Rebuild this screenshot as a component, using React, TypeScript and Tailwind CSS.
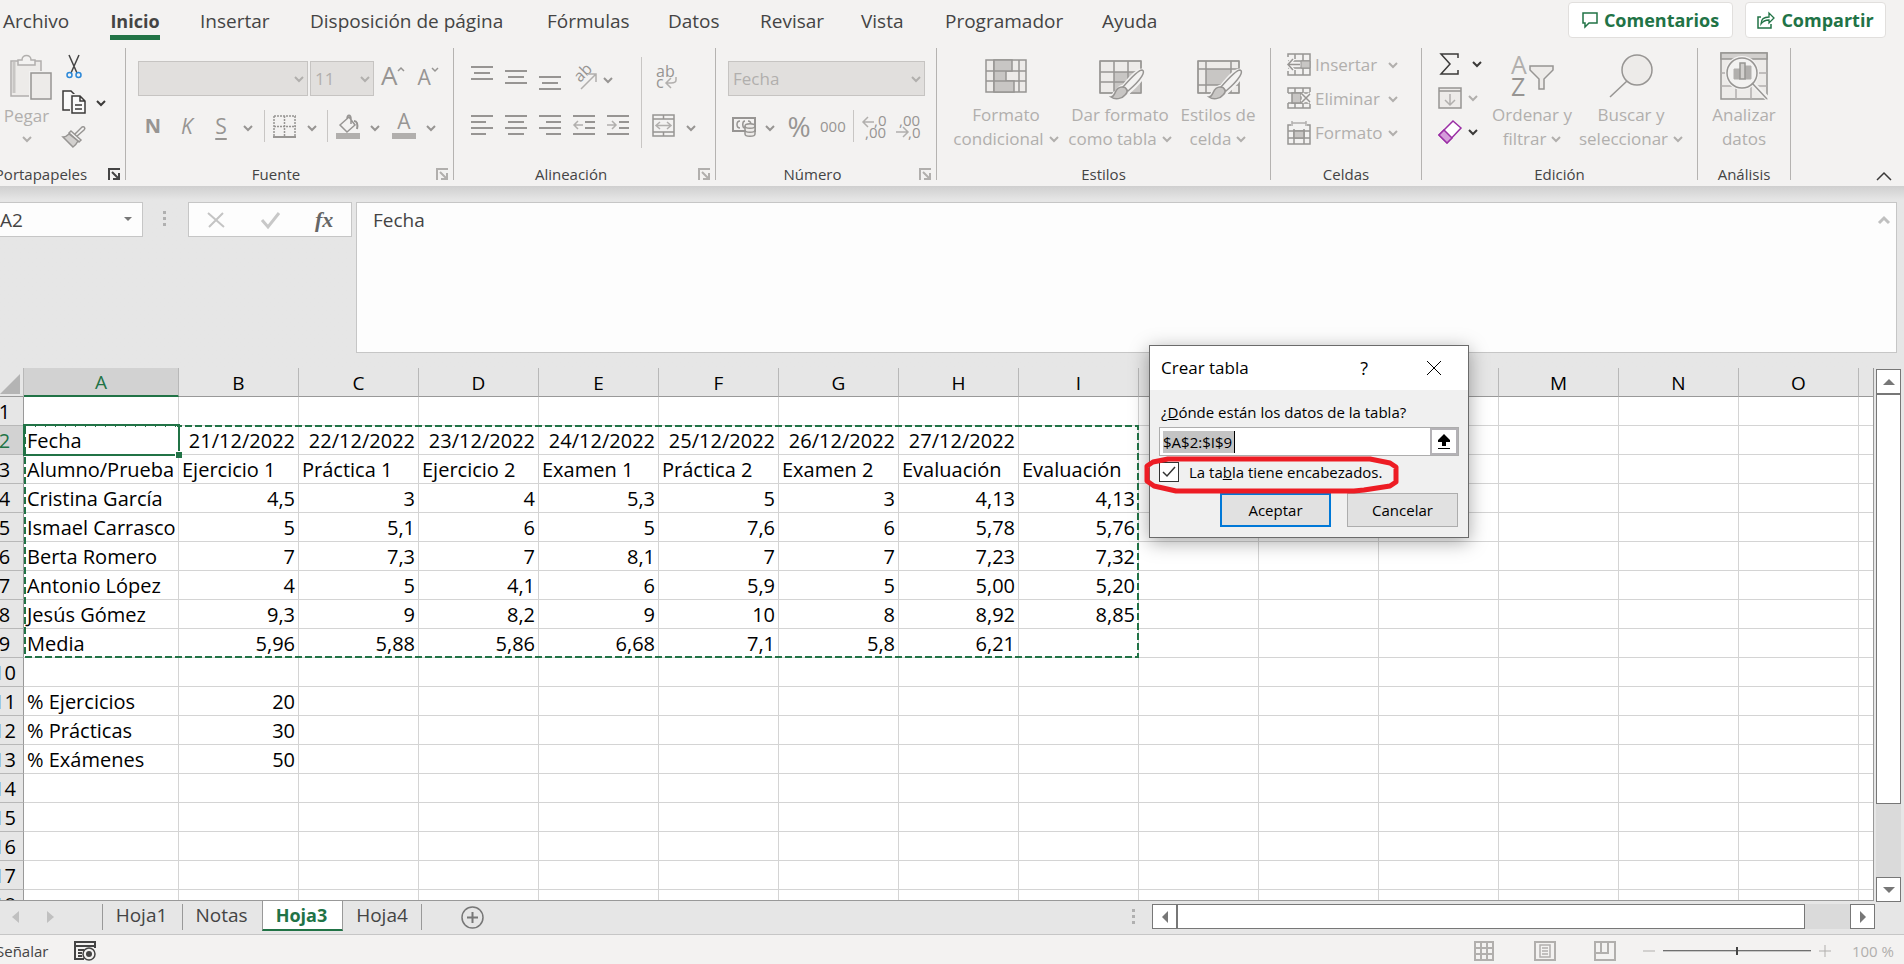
import type { ReactNode } from "react";
import clsx from "clsx";

const COLUMNS = ["A", "B", "C", "D", "E", "F", "G", "H", "I", "J", "K", "L", "M", "N", "O"];

const ROWS: string[][] = [
  [],
  ["Fecha", "21/12/2022", "22/12/2022", "23/12/2022", "24/12/2022", "25/12/2022", "26/12/2022", "27/12/2022"],
  ["Alumno/Prueba", "Ejercicio 1", "Práctica 1", "Ejercicio 2", "Examen 1", "Práctica 2", "Examen 2", "Evaluación", "Evaluación"],
  ["Cristina García", "4,5", "3", "4", "5,3", "5", "3", "4,13", "4,13"],
  ["Ismael Carrasco", "5", "5,1", "6", "5", "7,6", "6", "5,78", "5,76"],
  ["Berta Romero", "7", "7,3", "7", "8,1", "7", "7", "7,23", "7,32"],
  ["Antonio López", "4", "5", "4,1", "6", "5,9", "5", "5,00", "5,20"],
  ["Jesús Gómez", "9,3", "9", "8,2", "9", "10", "8", "8,92", "8,85"],
  ["Media", "5,96", "5,88", "5,86", "6,68", "7,1", "5,8", "6,21"],
  [],
  ["% Ejercicios", "20"],
  ["% Prácticas", "30"],
  ["% Exámenes", "50"],
  [],
  [],
  [],
  [],
  [],
];

const MENU = [
  { name: "Archivo", width: "w-[107px]" },
  { name: "Inicio", width: "w-[90px]" },
  { name: "Insertar", width: "w-[110px]" },
  { name: "Disposición de página", width: "w-[237px]" },
  { name: "Fórmulas", width: "w-[121px]" },
  { name: "Datos", width: "w-[92px]" },
  { name: "Revisar", width: "w-[101px]" },
  { name: "Vista", width: "w-[84px]" },
  { name: "Programador", width: "w-[157px]" },
  { name: "Ayuda", width: "w-[80px]" },
];

const Svg = ({ w, h, children, className }: { w: number; h: number; children: ReactNode; className?: string }) => (
  <svg width={w} height={h} viewBox={`0 0 ${w} ${h}`} fill="none" stroke="currentColor" className={clsx("shrink-0 overflow-visible", className)}>
    {children}
  </svg>
);

const Chevron = ({ className }: { className?: string }) => (
  <Svg w={10} h={6} className={className}>
    <path d="M1 1l4 4 4-4" strokeWidth="2" />
  </Svg>
);

const IconButton = ({ label, className, children }: { label: string; className?: string; children: ReactNode }) => (
  <button type="button" aria-label={label} className={clsx("flex shrink-0 items-center", className)}>
    {children}
  </button>
);

const Launcher = ({ active }: { active?: boolean }) => (
  <IconButton label="Más opciones" className={clsx("mr-[5px] w-[22px] justify-end", active ? "text-[#444]" : "text-[#b1afad]")}>
    <Svg w={12} h={12}>
      <path d="M1 12V1h11" strokeWidth="2" />
      <path d="M4 4l6 6M11 5v6H5" strokeWidth="2" />
    </Svg>
  </IconButton>
);

const Group = ({ title, width, launcher, children }: { title: string; width: string; launcher?: "on" | "off"; children: ReactNode }) => (
  <section className={clsx("flex h-[132px] shrink-0 flex-col border-r border-[#b5b3b1]", width)}>
    <div className="flex-1">{children}</div>
    <div className="flex h-3 items-center">
      <h2 className="flex-1 text-center text-[15px] leading-5 text-[#444]">{title}</h2>
      {launcher && <Launcher active={launcher === "on"} />}
    </div>
  </section>
);

const LargeButton = ({ icon, top, bottom, menu, className }: { icon: ReactNode; top: string; bottom: string; menu?: boolean; className?: string }) => (
  <button type="button" className={clsx("flex shrink-0 flex-col items-center text-[17px] leading-6 whitespace-nowrap text-[#b1afad]", className)}>
    <span className="flex h-[55px] items-center text-[#979593]">{icon}</span>
    <span>{top}</span>
    <span className="flex items-center gap-[5px]">
      {bottom}
      {menu && <Chevron />}
    </span>
  </button>
);

const DropDown = ({ label, value, className }: { label: string; value: string; className: string }) => (
  <div className={clsx("relative shrink-0", className)}>
    <select aria-label={label} className="h-[35px] w-full appearance-none border border-[#c6c4c2] bg-[#e1dfdd] px-1 text-[17px] leading-6 text-[#b1afad]">
      <option>{value}</option>
    </select>
    <Chevron className="pointer-events-none absolute top-[15px] right-1 text-[#b1afad]" />
  </div>
);

const Lines = ({ rows }: { rows: [number, number, number][] }) => (
  <>
    {rows.map(([x1, x2, y]) => (
      <path key={y} d={`M${x1} ${y}H${x2}`} strokeWidth="2" />
    ))}
  </>
);

const Brush = () => (
  <>
    <path d="M16 35c4-1 3-7 9-7 4 0 5 5 2 8-3 4-10 5-15 2 2 0 3-1 4-3z" fill="#f3f2f1" stroke="#f3f2f1" strokeWidth="5" />
    <path d="M25 28C31 20 38 12 43 12c4 0 1 7-13 20z" fill="#f3f2f1" stroke="#f3f2f1" strokeWidth="5" />
    <path d="M24 28C31 20 39 11 43 11c4 1 0 9-14 21z" fill="#f3f2f1" strokeWidth="1.5" />
    <path d="M12 38c5 0 3-10 11-10 5 0 7 5 3 8-3 4-10 5-14 2z" fill="#c8c6c4" strokeWidth="1.5" />
  </>
);

function MenuBar() {
  return (
    <header className="flex h-11 items-start">
      <nav className="flex pl-[19px]">
        {MENU.map(({ name, width }) => (
          <div key={name} className={clsx("shrink-0 leading-6 text-[#444]", width)}>
            <button
              type="button"
              className={clsx(
                "block h-10 border-b-[5px] pt-[6px] whitespace-nowrap",
                name === "Inicio" ? "w-[50px] border-[#217346] text-lg leading-6 font-bold" : "border-transparent text-[19px] leading-6"
              )}
            >
              {name}
            </button>
          </div>
        ))}
      </nav>
      <div className="mt-[2px] mr-[18px] ml-auto flex gap-3 text-lg font-bold text-[#217346]">
        <button type="button" className="flex h-9 w-[165px] items-center justify-center gap-[6px] rounded-sm border border-[#e1dfdd] bg-white">
          <Svg w={16} h={17}>
            <path d="M1 1h14v10H7l-4 4v-4H1z" strokeWidth="1.5" />
          </Svg>
          Comentarios
        </button>
        <button type="button" className="flex h-9 w-[141px] items-center justify-center gap-[6px] rounded-sm border border-[#e1dfdd] bg-white">
          <Svg w={18} h={18}>
            <path d="M4 6H1v11h13v-4" strokeWidth="1.5" />
            <path d="M4 13c0-5 3-7 8-7V2l5 5-5 5V9c-4 0-6 1-8 4z" strokeWidth="1.3" />
          </Svg>
          Compartir
        </button>
      </div>
    </header>
  );
}

function Clipboard() {
  return (
    <Group title="Portapapeles" width="w-[142px]" launcher="on">
      <div className="flex">
        <button type="button" className="ml-[14px] flex w-[57px] flex-col items-center pt-[6px] text-[17px] leading-6 text-[#b1afad]">
          <Svg w={42} h={46} className="ml-2 text-[#979593]">
            <path d="M10 7H1v35h30V7h-9" fill="#edebe9" stroke="#b1afad" strokeWidth="1.5" />
            <path d="M4 8v31" stroke="#c8c6c4" strokeWidth="3" />
            <path d="M8 11V6h4c0-6 9-6 9 0h4v5z" fill="#f3f2f1" stroke="#b1afad" strokeWidth="1.5" />
            <rect x="19" y="17" width="24" height="30" fill="#f3f2f1" stroke="none" />
            <rect x="21" y="19" width="20" height="26" fill="#edebe9" strokeWidth="1.5" />
          </Svg>
          <span className="mt-1">Pegar</span>
          <Chevron className="mt-2" />
        </button>
        <div className="ml-[7px] flex flex-col pt-[6px]">
          <IconButton label="Cortar" className="h-6 w-6 justify-center">
            <Svg w={16} h={25}>
              <path d="M3 1l8 18M13 1L5 19" stroke="#444" strokeWidth="1.5" />
              <circle cx="3.500" cy="21" r="2.500" stroke="#2b88d8" strokeWidth="1.5" />
              <circle cx="12.500" cy="21" r="2.500" stroke="#2b88d8" strokeWidth="1.5" />
            </Svg>
          </IconButton>
          <IconButton label="Copiar" className="mt-3 gap-[10px] text-[#3b3a39]">
            <Svg w={24} h={25}>
              <path d="M1 1h8l4 4v15H1z" fill="#fafafa" strokeWidth="1.5" />
              <path d="M10 6h8l5 5v12H10z" fill="#fafafa" stroke="#f3f2f1" strokeWidth="4" />
              <path d="M10 6h8l5 5v12H10zM18 6v5h5M13 15h7M13 19h7" fill="#fafafa" strokeWidth="1.5" />
            </Svg>
            <Chevron />
          </IconButton>
          <IconButton label="Copiar formato" className="mt-[10px] text-[#979593]">
            <Svg w={24} h={24}>
              <path d="M12 10l8-8c2-1 4 1 2 3l-8 7" strokeWidth="1.5" />
              <path d="M9 6l10 9-2 2L7 8z" fill="#f3f2f1" strokeWidth="1.5" />
              <path d="M7 9c-2 2-4 3-6 3l10 10c3-2 4-4 5-6z" fill="#d2d0ce" strokeWidth="1.5" />
            </Svg>
          </IconButton>
        </div>
      </div>
    </Group>
  );
}

function FontGroup() {
  return (
    <Group title="Fuente" width="w-[328px]" launcher="off">
      <div className="flex pt-[13px] pl-3 text-[#979593]">
        <DropDown label="Fuente" value="" className="w-[170px]" />
        <DropDown label="Tamaño de fuente" value="11" className="ml-[2px] w-16" />
        <IconButton label="Aumentar tamaño" className="ml-[7px] h-7">
          <span className="text-[26px] leading-7">A</span>
          <Svg w={8} h={5} className="mb-3">
            <path d="M1 4l3-3 3 3" strokeWidth="1.5" />
          </Svg>
        </IconButton>
        <IconButton label="Disminuir tamaño" className="ml-3 h-8">
          <span className="text-[21px] leading-7">A</span>
          <Svg w={8} h={5} className="mb-4">
            <path d="M1 1l3 3 3-3" strokeWidth="1.5" />
          </Svg>
        </IconButton>
      </div>
      <div className="mt-[14px] flex h-8 items-center pl-[10px] text-[21px] leading-6 text-[#979593]">
        <button type="button" className="w-[34px] text-xl font-bold">N</button>
        <button type="button" className="w-[34px] italic">K</button>
        <button type="button" className="w-[34px] underline underline-offset-4">S</button>
        <Chevron className="mt-1 ml-[5px]" />
        <span className="ml-[11px] h-8 w-px bg-[#c8c6c4]" />
        <IconButton label="Bordes" className="ml-2">
          <Svg w={23} h={23}>
            <path d="M1 1h22M1 1v20M22 1v20M11.500 1v20M1 11.500h22" strokeWidth="1.5" strokeDasharray="2 1" />
            <path d="M0 22h23" strokeWidth="2" />
          </Svg>
        </IconButton>
        <Chevron className="mt-1 ml-[11px]" />
        <span className="ml-[10px] h-8 w-px bg-[#c8c6c4]" />
        <IconButton label="Color de relleno" className="ml-2">
          <Svg w={24} h={25}>
            <path d="M4 11l9-8 6 8-8 7zM11 5c0-5 4-5 4 0v5" strokeWidth="1.5" />
            <path d="M18 7c3 0 4 3 3 8" strokeWidth="2" />
            <rect y="19" width="24" height="6" fill="#b1afad" stroke="none" />
          </Svg>
        </IconButton>
        <Chevron className="mt-1 ml-[10px]" />
        <button type="button" className="ml-3 flex h-[25px] w-6 items-center justify-center border-b-[6px] border-[#b1afad] pb-1">A</button>
        <Chevron className="mt-1 ml-[10px]" />
      </div>
    </Group>
  );
}

function Alignment() {
  return (
    <Group title="Alineación" width="w-[262px]" launcher="off">
      <div className="flex text-[#979593]">
        <div className="w-[187px] pl-[17px]">
          <div className="mt-[17px] flex h-[26px] gap-3">
            <Svg w={22} h={26}>
              <Lines rows={[[0, 22, 2], [3, 19, 8], [0, 22, 14]]} />
            </Svg>
            <Svg w={22} h={26}>
              <Lines rows={[[0, 22, 6], [3, 19, 12], [0, 22, 18]]} />
            </Svg>
            <Svg w={22} h={26}>
              <Lines rows={[[0, 22, 12], [3, 19, 18], [0, 22, 24]]} />
            </Svg>
            <IconButton label="Orientación" className="gap-[6px]">
              <Svg w={24} h={26}>
                <text transform="translate(7 18) rotate(-45)" fontSize="16" fill="currentColor" stroke="none">ab</text>
                <path d="M8 24L23 9M15 9h8v8" strokeWidth="1.500" stroke="#b1afad" />
              </Svg>
              <Chevron className="mt-1" />
            </IconButton>
          </div>
          <div className="mt-[22px] flex gap-3">
            <Svg w={22} h={22}>
              <Lines rows={[[0, 22, 3], [0, 15, 9], [0, 22, 15], [0, 15, 21]]} />
            </Svg>
            <Svg w={22} h={22}>
              <Lines rows={[[0, 22, 3], [3, 19, 9], [0, 22, 15], [3, 19, 21]]} />
            </Svg>
            <Svg w={22} h={22}>
              <Lines rows={[[0, 22, 3], [7, 22, 9], [0, 22, 15], [7, 22, 21]]} />
            </Svg>
            <Svg w={22} h={22}>
              <Lines rows={[[0, 22, 3], [12, 22, 9], [12, 22, 15], [0, 22, 21]]} />
              <path d="M10 12H1M5 8l-4 4 4 4" strokeWidth="1.500" stroke="#b1afad" />
            </Svg>
            <Svg w={22} h={22}>
              <Lines rows={[[0, 22, 3], [12, 22, 9], [12, 22, 15], [0, 22, 21]]} />
              <path d="M0 12h9M5 8l4 4-4 4" strokeWidth="1.500" stroke="#b1afad" />
            </Svg>
          </div>
        </div>
        <span className="mt-[9px] h-[91px] w-px bg-[#c8c6c4]" />
        <div className="pt-[17px] pl-[10px]">
          <IconButton label="Ajustar texto" className="ml-1">
            <Svg w={22} h={26}>
              <text x="0" y="12" fontSize="16" fill="currentColor" stroke="none">ab</text>
              <text x="0" y="23" fontSize="16" fill="currentColor" stroke="none">c</text>
              <path d="M20 12v3c0 3-3 3-5 3h-5M15 13l-5 5 5 5" stroke="#b1afad" strokeWidth="1.500" />
            </Svg>
          </IconButton>
          <IconButton label="Combinar y centrar" className="mt-[23px] gap-[11px]">
            <Svg w={23} h={23}>
              <path d="M1 1h21v21H1zM1 5h21M1 18h21M11.500 1v4M11.500 18v4" strokeWidth="1.500" />
              <path d="M4 11.500h15M8 8l-4 3.500L8 15M15 8l4 3.500-4 3.500" strokeWidth="1.500" stroke="#b1afad" />
            </Svg>
            <Chevron className="mt-1" />
          </IconButton>
        </div>
      </div>
    </Group>
  );
}

function NumberGroup() {
  return (
    <Group title="Número" width="w-[221px]" launcher="off">
      <div className="pt-[13px] pl-3">
        <DropDown label="Formato de número" value="Fecha" className="w-[197px]" />
      </div>
      <div className="mt-[14px] flex h-8 items-center pl-4 text-[#979593]">
        <IconButton label="Formato de contabilidad" className="gap-[9px]">
          <Svg w={24} h={21}>
            <path d="M1 2h22v13H1z" strokeWidth="2" />
            <path d="M8 5c-4 0-4 7 0 7M13 5c-3 0-3 7 0 7M16 5c3 0 3 3 3 4" strokeWidth="1.500" />
            <path d="M13 10c0-3 10-3 10 0v8c0 3-10 3-10 0z" fill="#edebe9" strokeWidth="1.500" />
            <path d="M13 10c0 3 10 3 10 0M13 14c0 3 10 3 10 0" strokeWidth="1.500" />
          </Svg>
          <Chevron className="mt-1" />
        </IconButton>
        <button type="button" className="ml-3 w-6 text-[28px] leading-8">%</button>
        <button type="button" className="ml-[9px] w-6 text-[15px] leading-6">000</button>
        <span className="ml-[9px] h-8 w-px bg-[#c8c6c4]" />
        <IconButton label="Aumentar decimales" className="ml-2">
          <Svg w={24} h={25}>
            <path d="M12 8H1M6 3L1 8l5 5" strokeWidth="1.500" stroke="#b1afad" />
            <text x="12" y="12" fontSize="15" fill="currentColor" stroke="none">,0</text>
            <text x="3" y="24" fontSize="15" fill="currentColor" stroke="none">,00</text>
          </Svg>
        </IconButton>
        <IconButton label="Disminuir decimales" className="ml-[10px]">
          <Svg w={24} h={25}>
            <path d="M0 18h12M7 13l5 5-5 5" strokeWidth="1.500" stroke="#b1afad" />
            <text x="3" y="12" fontSize="15" fill="currentColor" stroke="none">,00</text>
            <text x="12" y="24" fontSize="15" fill="currentColor" stroke="none">,0</text>
          </Svg>
        </IconButton>
      </div>
    </Group>
  );
}

function Styles() {
  return (
    <Group title="Estilos" width="w-[334px]">
      <div className="flex pl-[14px]">
        <LargeButton
          className="w-[110px]"
          top="Formato"
          bottom="condicional"
          menu
          icon={
            <Svg w={42} h={34}>
              <path d="M1 1h40v32H1zM1 12h40M1 22h40M9 1v32M34 1v32" fill="#edebe9" strokeWidth="1.500" />
              <path d="M9 1h18v11H9zM9 12h12v10H9zM9 22h20v11H9z" fill="#c8c6c4" strokeWidth="1.500" />
            </Svg>
          }
        />
        <LargeButton
          className="ml-[2px] w-[114px]"
          top="Dar formato"
          bottom="como tabla"
          menu
          icon={
            <Svg w={46} h={42} className="mt-2 ml-1">
              <path d="M1 2h41v32H1z" fill="#edebe9" />
              <path d="M15 13h27v21H15z" fill="#c8c6c4" stroke="none" />
              <path d="M1 2h41v32H1zM1 13h41M1 23h41M15 2v32M29 2v32" strokeWidth="1.500" />
              <Brush />
            </Svg>
          }
        />
        <LargeButton
          className="w-[82px]"
          top="Estilos de"
          bottom="celda"
          menu
          icon={
            <Svg w={46} h={42} className="mt-2 ml-1">
              <path d="M1 2h41v32H1z" fill="#edebe9" />
              <path d="M9 10h25v16H9z" fill="#c8c6c4" stroke="none" />
              <path d="M1 2h41v32H1zM1 10h41M1 26h41M9 2v32M34 2v32" strokeWidth="1.500" />
              <Brush />
            </Svg>
          }
        />
      </div>
    </Group>
  );
}

const CellButton = ({ label, children }: { label: string; children: ReactNode }) => (
  <button type="button" className="flex h-[34px] items-center text-[17px] leading-6 text-[#b1afad]">
    <Svg w={24} h={24} className="text-[#979593]">
      {children}
    </Svg>
    <span className="ml-1 w-[68px] text-left">{label}</span>
    <Chevron className="ml-[5px]" />
  </button>
);

function Cells() {
  return (
    <Group title="Celdas" width="w-[151px]">
      <div className="flex flex-col pl-4">
        <CellButton label="Insertar">
          <path d="M1 4V1h22v21H1v-4M1 8h22M1 15h22M8 1v5M16 1v21M8 17v5" strokeWidth="1.500" />
          <path d="M14 8h9v7h-9z" fill="#c8c6c4" />
          <path d="M13 11.500H1M6 6l-5 5.500L6 17" stroke="#f3f2f1" strokeWidth="4" />
          <path d="M13 11.500H1M6 6l-5 5.500L6 17" strokeWidth="1.500" />
        </CellButton>
        <CellButton label="Eliminar">
          <path d="M1 6V1h22v4M1 16v5h22v-4M1 6h22M1 16h22M8 1v5M16 1v5M8 16v5M16 16v5" strokeWidth="1.500" />
          <path d="M5 6h9v10H5z" fill="#c8c6c4" strokeWidth="1.500" />
          <path d="M15 7l8 8M23 7l-8 8" stroke="#f3f2f1" strokeWidth="4" />
          <path d="M15 7l8 8M23 7l-8 8" strokeWidth="1.500" />
        </CellButton>
        <CellButton label="Formato">
          <path d="M5 0v5M19 0v5M5 2h14" stroke="#b1afad" strokeWidth="1.500" />
          <path d="M4 4H1v19h22V4h-3M1 10h22M1 17h22M7 8v15M17 8v15" strokeWidth="1.500" />
          <path d="M7 10h10v7H7z" fill="#c8c6c4" strokeWidth="1.500" />
        </CellButton>
      </div>
    </Group>
  );
}

function Editing() {
  return (
    <Group title="Edición" width="w-[276px]">
      <div className="flex pl-4">
        <div className="flex w-[46px] flex-col items-start">
          <IconButton label="Autosuma" className="h-8 gap-[11px] text-[#3b3a39]">
            <Svg w={23} h={22}>
              <path d="M20 5V1H3l9 10L3 21h17v-4" strokeWidth="1.500" />
            </Svg>
            <Chevron />
          </IconButton>
          <IconButton label="Rellenar" className="h-9 gap-[6px] text-[#979593]">
            <Svg w={24} h={22}>
              <path d="M1 1h22v20H1zM1 4h22" fill="#edebe9" strokeWidth="1.500" />
              <path d="M12 7v11M7 13l5 5 5-5" stroke="#b1afad" strokeWidth="1.500" />
            </Svg>
            <Chevron className="text-[#b1afad]" />
          </IconButton>
          <IconButton label="Borrar" className="h-8 gap-[6px] text-[#3b3a39]">
            <Svg w={24} h={24}>
              <path d="M15 1l8 7L9 23l-8-8z" fill="#fff" stroke="#9b2fa5" strokeWidth="1.500" />
              <path d="M6 10l8 8-5 5-8-8z" fill="#d59ddb" stroke="#9b2fa5" strokeWidth="1.500" />
            </Svg>
            <Chevron />
          </IconButton>
        </div>
        <LargeButton
          className="w-24"
          top="Ordenar y"
          bottom="filtrar"
          menu
          icon={
            <Svg w={44} h={42}>
              <text x="1" y="19" fontSize="25" fill="#b1afad" stroke="none">A</text>
              <text x="1" y="41" fontSize="25" fill="currentColor" stroke="none">Z</text>
              <path d="M20 11h23v4l-9 9v10h-5V24l-9-9z" fill="#edebe9" strokeWidth="1.500" />
            </Svg>
          }
        />
        <LargeButton
          className="w-[102px]"
          top="Buscar y"
          bottom="seleccionar"
          menu
          icon={
            <Svg w={44} h={45}>
              <circle cx="28" cy="17" r="15" fill="#edebe9" strokeWidth="1.500" />
              <path d="M18 28L1 44" strokeWidth="1.500" />
            </Svg>
          }
        />
      </div>
    </Group>
  );
}

function Analysis() {
  return (
    <Group title="Análisis" width="w-[93px]">
      <LargeButton
        className="w-full"
        top="Analizar"
        bottom="datos"
        icon={
          <Svg w={48} h={48}>
            <path d="M1 1h46v46H1z" fill="#edebe9" strokeWidth="1.500" />
            <path d="M1 1h46v6H1z" fill="#d2d0ce" strokeWidth="1.500" />
            <path d="M1 21h46M1 34h46M16 34v13M31 34v13" stroke="#b1afad" strokeWidth="1.500" />
            <circle cx="22" cy="21" r="17" fill="#f3f2f1" stroke="none" />
            <path d="M32 31l16 16" stroke="#f3f2f1" strokeWidth="5" />
            <circle cx="22" cy="21" r="15" strokeWidth="1.500" />
            <path d="M14 17h6v10h-6zM25 14h6v13h-6z" fill="#b1afad" stroke="#b1afad" />
            <path d="M20 11h5v16h-5z" fill="#d2d0ce" strokeWidth="1.500" />
            <path d="M32 31l15 16" strokeWidth="1.500" />
          </Svg>
        }
      />
    </Group>
  );
}

function Ribbon() {
  return (
    <div className="flex h-[142px] shrink-0 pt-1">
      <Clipboard />
      <FontGroup />
      <Alignment />
      <NumberGroup />
      <Styles />
      <Cells />
      <Editing />
      <Analysis />
      <IconButton label="Contraer la cinta" className="mt-auto mr-3 mb-[5px] ml-auto text-[#3b3a39]">
        <Svg w={16} h={10}>
          <path d="M1 9l7-7 7 7" strokeWidth="1.500" />
        </Svg>
      </IconButton>
    </div>
  );
}

function FormulaBar() {
  return (
    <div className="flex h-[182px] shrink-0 items-start bg-linear-to-b from-[#cfcfcf] to-[#e6e6e6] to-[14px] pt-4 pr-[7px]">
      <div className="relative">
        <input aria-label="Cuadro de nombres" defaultValue="A2" className="h-[35px] w-[159px] border border-[#c6c6c6] bg-[#fdfdfd] pl-[15px] text-[19px] text-[#444]" />
        <Svg w={8} h={5} className="absolute top-[15px] right-[11px]">
          <path d="M0 0h8L4 4z" fill="#777" stroke="none" />
        </Svg>
      </div>
      <div className="mt-[9px] ml-5 flex w-[3px] flex-col gap-[3px]">
        <span className="h-[3px] bg-[#b0b0b0]" />
        <span className="h-[3px] bg-[#b0b0b0]" />
        <span className="h-[3px] bg-[#b0b0b0]" />
      </div>
      <div className="ml-[22px] flex h-[35px] w-[164px] items-center border border-[#c6c6c6] bg-[#fdfdfd] pl-[18px]">
        <IconButton label="Cancelar edición" className="text-[#c4c4c4]">
          <Svg w={18} h={18}>
            <path d="M1 2l16 14M16 2L2 16" strokeWidth="2" />
          </Svg>
        </IconButton>
        <IconButton label="Introducir" className="ml-9 text-[#c8c8c8]">
          <Svg w={20} h={18}>
            <path d="M1 9l6 7L18 2" strokeWidth="3" />
          </Svg>
        </IconButton>
        <button type="button" aria-label="Insertar función" className="ml-[34px] font-['Liberation_Serif',serif] text-[22px] leading-6 font-bold text-[#666] italic">
          fx
        </button>
      </div>
      <div className="relative ml-1 flex flex-1">
        <textarea
          aria-label="Barra de fórmulas"
          defaultValue="Fecha"
          className="h-[151px] w-full resize-none border border-[#c6c6c6] bg-[#fdfdfd] px-4 pt-[5px] text-[19px] leading-6 text-[#444]"
        />
        <Svg w={12} h={9} className="absolute top-[13px] right-[7px] text-[#c0c0c0]">
          <path d="M1 8l5-5 5 5" strokeWidth="3" />
        </Svg>
      </div>
    </div>
  );
}

const isText = (value: string) => !/^[\d,/]+$/.test(value);

function Sheet() {
  return (
    <div className="relative min-w-0 flex-1 overflow-hidden border-r border-b border-[#999] bg-[#e6e6e6]">
      <table className="w-full table-fixed border-separate border-spacing-0 text-xl leading-[26px] text-black">
        <colgroup>
          <col className="w-10" />
          <col className="w-[155px]" />
          {COLUMNS.slice(1).map((name) => (
            <col key={name} className="w-[120px]" />
          ))}
          <col />
        </colgroup>
        <thead>
          <tr className="h-[29px]">
            <th className="border-r border-b border-[#999] border-r-[#b8b8b8] p-0">
              <Svg w={20} h={20} className="mt-1 ml-4">
                <path d="M20 0v20H0z" fill="#b4b4b4" stroke="none" />
              </Svg>
            </th>
            {COLUMNS.map((name) => (
              <th
                key={name}
                className={clsx(
                  "h-[29px] border-r p-0 pt-px text-[19px] leading-[26px] font-normal",
                  name === "A" ? "border-b-2 border-r-[#b8b8b8] border-b-[#217346] bg-[#d2d2d2] text-[#217346]" : "border-b border-r-[#b8b8b8] border-b-[#999]"
                )}
              >
                {name}
              </th>
            ))}
            <th className="border-b border-[#999] p-0" />
          </tr>
        </thead>
        <tbody>
          {ROWS.map((row, r) => (
            <tr key={r} className="h-[29px]">
              <th
                className={clsx(
                  "h-[29px] border-r border-b border-r-[#999] border-b-[#b8b8b8] p-0 pt-[2px] pl-[2px] font-normal",
                  r === 1 && "bg-[#d2d2d2] text-[#217346]"
                )}
              >
                {r + 1}
              </th>
              {COLUMNS.map((name, c) => {
                const value = row[c] ?? "";
                return (
                  <td
                    key={name}
                    className={clsx("h-[29px] border-r border-b border-[#d4d4d4] bg-white px-[3px] pt-[2px] pb-0 whitespace-nowrap", isText(value) ? "text-left" : "text-right")}
                  >
                    {value}
                  </td>
                );
              })}
              <td className="border-b border-[#d4d4d4] bg-white p-0" />
            </tr>
          ))}
        </tbody>
      </table>
      {/* active cell and copied range */}
      <div className="absolute top-[56px] left-[39px] h-[32px] w-[157px] border-2 border-[#217346]">
        <span className="absolute -right-1 -bottom-1 h-[7px] w-[7px] border-t border-l border-white bg-[#217346]" />
      </div>
      <svg className="absolute top-[57px] left-10 h-[234px] w-[1116px]" fill="none">
        <rect x="1" y="1" width="1113" height="231" stroke="#217346" strokeWidth="2" strokeDasharray="7 3" />
        <path d="M2 1.500h151" stroke="#fff" strokeDasharray="7 3" />
      </svg>
    </div>
  );
}

const ScrollButton = ({ label, d, className }: { label: string; d: string; className?: string }) => (
  <button type="button" aria-label={label} className={clsx("flex h-[25px] w-[25px] shrink-0 items-center justify-center border border-[#777] bg-white", className)}>
    <Svg w={12} h={12}>
      <path d={d} fill="#777" stroke="none" />
    </Svg>
  </button>
);

function VerticalScroll() {
  return (
    <div className="mt-px mr-[3px] -mb-px ml-[2px] flex w-[25px] flex-col bg-[#dadada]">
      <ScrollButton label="Subir" d="M0 9h12L6 3z" />
      <div className="h-[410px] border border-[#777] bg-white" />
      <ScrollButton label="Bajar" className="mt-auto" d="M0 3h12L6 9z" />
    </div>
  );
}

function SheetTabs() {
  return (
    <div className="flex h-[34px] shrink-0 items-start border-b border-[#c6c6c6] text-[#444]">
      <div className="flex w-[118px] items-center gap-7 pt-[10px] pl-[28px]">
        <Svg w={7} h={12}>
          <path d="M7 0v12L0 6z" fill="#c0c0c0" stroke="none" />
        </Svg>
        <Svg w={7} h={12}>
          <path d="M0 0v12l7-6z" fill="#c0c0c0" stroke="none" />
        </Svg>
      </div>
      <nav className="flex text-[19px] leading-5">
        <button type="button" className="mt-[3px] h-[26px] w-20 border-l border-[#999] pr-[2px] pb-1">Hoja1</button>
        <button type="button" className="mt-[3px] h-[26px] w-20 border-l border-[#999] pr-[2px] pb-1">Notas</button>
        <button type="button" className="-mt-px h-[31px] w-[81px] border-x border-b-2 border-x-[#999] border-b-[#217346] bg-white pr-[2px] text-lg leading-5 font-bold text-[#217346]">
          Hoja3
        </button>
        <button type="button" className="mt-[3px] h-[26px] w-[79px] border-r border-[#999] pb-1">Hoja4</button>
      </nav>
      <IconButton label="Hoja nueva" className="mt-[5px] ml-[39px] text-[#777]">
        <Svg w={23} h={23}>
          <circle cx="11.500" cy="11.500" r="10.500" strokeWidth="1.500" />
          <path d="M6 11.500h11M11.500 6v11" strokeWidth="2" />
        </Svg>
      </IconButton>
      <div className="mt-2 mr-[17px] ml-auto flex w-[3px] flex-col gap-[3px]">
        <span className="h-[3px] bg-[#b0b0b0]" />
        <span className="h-[3px] bg-[#b0b0b0]" />
        <span className="h-[3px] bg-[#b0b0b0]" />
      </div>
      <div className="mt-[3px] mr-[29px] flex w-[723px] bg-[#dadada]">
        <ScrollButton label="Izquierda" d="M9 0v12L3 6z" />
        <div className="h-[25px] w-[628px] border border-[#777] bg-white" />
        <ScrollButton label="Derecha" className="ml-auto" d="M3 0v12l6-6z" />
      </div>
    </div>
  );
}

function StatusBar() {
  return (
    <footer className="flex h-[29px] shrink-0 items-center bg-[#f3f2f1] pt-[2px] pr-[10px] pl-3 text-[15px] leading-5 text-[#444]">
      <span className="w-[78px]">Señalar</span>
      <IconButton label="Grabar macro">
        <Svg w={23} h={20}>
          <path d="M10 18H1V1h20v6M1 5h20M4 9h6M4 12h4M4 15h4" strokeWidth="2" />
          <circle cx="15" cy="13" r="6" strokeWidth="1.500" />
          <circle cx="15" cy="13" r="3" fill="currentColor" stroke="none" />
        </Svg>
      </IconButton>
      <div className="ml-auto flex items-center text-[#b1afad]">
        <IconButton label="Normal">
          <Svg w={20} h={20}>
            <path d="M1 1h18v18H1zM1 7h18M1 13h18M7 1v18M13 1v18" strokeWidth="2" />
          </Svg>
        </IconButton>
        <IconButton label="Diseño de página" className="ml-10">
          <Svg w={22} h={20}>
            <path d="M1 1h20v18H1z" strokeWidth="2" />
            <path d="M6 4h10v12H6zM8 7h6M8 10h6M8 13h6" strokeWidth="1.500" />
          </Svg>
        </IconButton>
        <IconButton label="Vista previa de salto de página" className="ml-[38px]">
          <Svg w={22} h={20}>
            <path d="M1 1h20v18H1zM1 12h13V1M7 1v11" strokeWidth="2" />
          </Svg>
        </IconButton>
        <IconButton label="Alejar" className="ml-[27px]">
          <Svg w={12} h={12}>
            <path d="M0 6h12" />
          </Svg>
        </IconButton>
        <input
          type="range"
          aria-label="Zoom"
          className="mx-2 h-2 w-[148px] appearance-none bg-linear-to-b from-transparent from-[3px] via-[#444] via-[3px] to-transparent to-[5px] [&::-webkit-slider-thumb]:h-2 [&::-webkit-slider-thumb]:w-[2px] [&::-webkit-slider-thumb]:appearance-none [&::-webkit-slider-thumb]:bg-[#444]"
        />
        <IconButton label="Acercar">
          <Svg w={12} h={12}>
            <path d="M0 6h12M6 0v12" />
          </Svg>
        </IconButton>
        <span className="ml-[18px] w-[45px] text-right whitespace-nowrap">100 %</span>
      </div>
    </footer>
  );
}

function CreateTableDialog() {
  return (
    <div
      role="dialog"
      aria-label="Crear tabla"
      className="absolute top-[345px] left-[1165px] w-[320px] border border-[#6b6b6b] bg-[#f0f0f0] text-black shadow-[0_4px_18px_rgba(0,0,0,0.35)]"
    >
      <div className="flex h-11 items-center bg-white pr-[26px] pl-[11px]">
        <h2 className="flex-1 text-[17px] leading-6">Crear tabla</h2>
        <button type="button" aria-label="Ayuda" className="mr-[58px] text-lg leading-6">?</button>
        <IconButton label="Cerrar">
          <Svg w={16} h={16}>
            <path d="M1 1l14 14M15 1L1 15" />
          </Svg>
        </IconButton>
      </div>
      <div className="px-[9px] pt-3 pb-[10px] text-[15px] leading-5">
        <label htmlFor="range" className="block pl-[2px]">
          ¿<u>D</u>ónde están los datos de la tabla?
        </label>
        <div className="mt-[5px] flex border border-[#adadad] bg-white">
          <div className="flex flex-1 items-center pl-[3px]">
            <input id="range" defaultValue="$A$2:$I$9" className="h-[22px] w-[72px] border-r border-black bg-[#c4c4c4] text-[15px] outline-none" />
          </div>
          <button type="button" aria-label="Contraer diálogo" className="flex h-[27px] w-7 items-center justify-center border-2 border-[#b4b2b6] bg-white">
            <Svg w={14} h={16}>
              <path d="M7 0l6 6v2H9v4H5V8H1V6zM1 14h12v1H1z" fill="#000" stroke="none" />
            </Svg>
          </button>
        </div>
        <label className="relative mt-[6px] flex h-5 items-center gap-[10px]">
          <input type="checkbox" defaultChecked className="peer h-5 w-5 appearance-none border border-[#333] bg-white" />
          <Svg w={14} h={12} className="pointer-events-none absolute left-[3px] hidden peer-checked:block">
            <path d="M1 6l4 4 8-9" stroke="#333" strokeWidth="1.500" />
          </Svg>
          <span>
            La ta<u>b</u>la tiene encabezados.
          </span>
        </label>
        <div className="mt-[11px] flex justify-end gap-4 pr-px">
          <button type="button" className="h-[34px] w-[111px] border-2 border-[#0078d7] bg-[#e1e1e1]">Aceptar</button>
          <button type="button" className="h-[34px] w-[111px] border border-[#adadad] bg-[#e1e1e1]">Cancelar</button>
        </div>
      </div>
      {/* hand-drawn highlight around the checkbox */}
      <svg className="pointer-events-none absolute top-[109px] -left-[6px] h-10 w-64" fill="none" stroke="#ed1c24" strokeWidth="5" strokeLinejoin="round">
        <path d="M3 11l6-4 15-3h202l20 4 6 4v15l-6 4-26 4-10 1H32l-22-5-7-5z" />
      </svg>
    </div>
  );
}

export default function App() {
  return (
    <div className="h-screen overflow-hidden font-['Open_Sans',sans-serif]">
      <div className="relative -ml-4 flex h-full flex-col bg-[#e6e6e6]">
        <div className="bg-[#f3f2f1]">
          <MenuBar />
          <Ribbon />
        </div>
        <FormulaBar />
        <main className="flex min-h-0 flex-1">
          <Sheet />
          <VerticalScroll />
        </main>
        <SheetTabs />
        <StatusBar />
        <CreateTableDialog />
      </div>
    </div>
  );
}
